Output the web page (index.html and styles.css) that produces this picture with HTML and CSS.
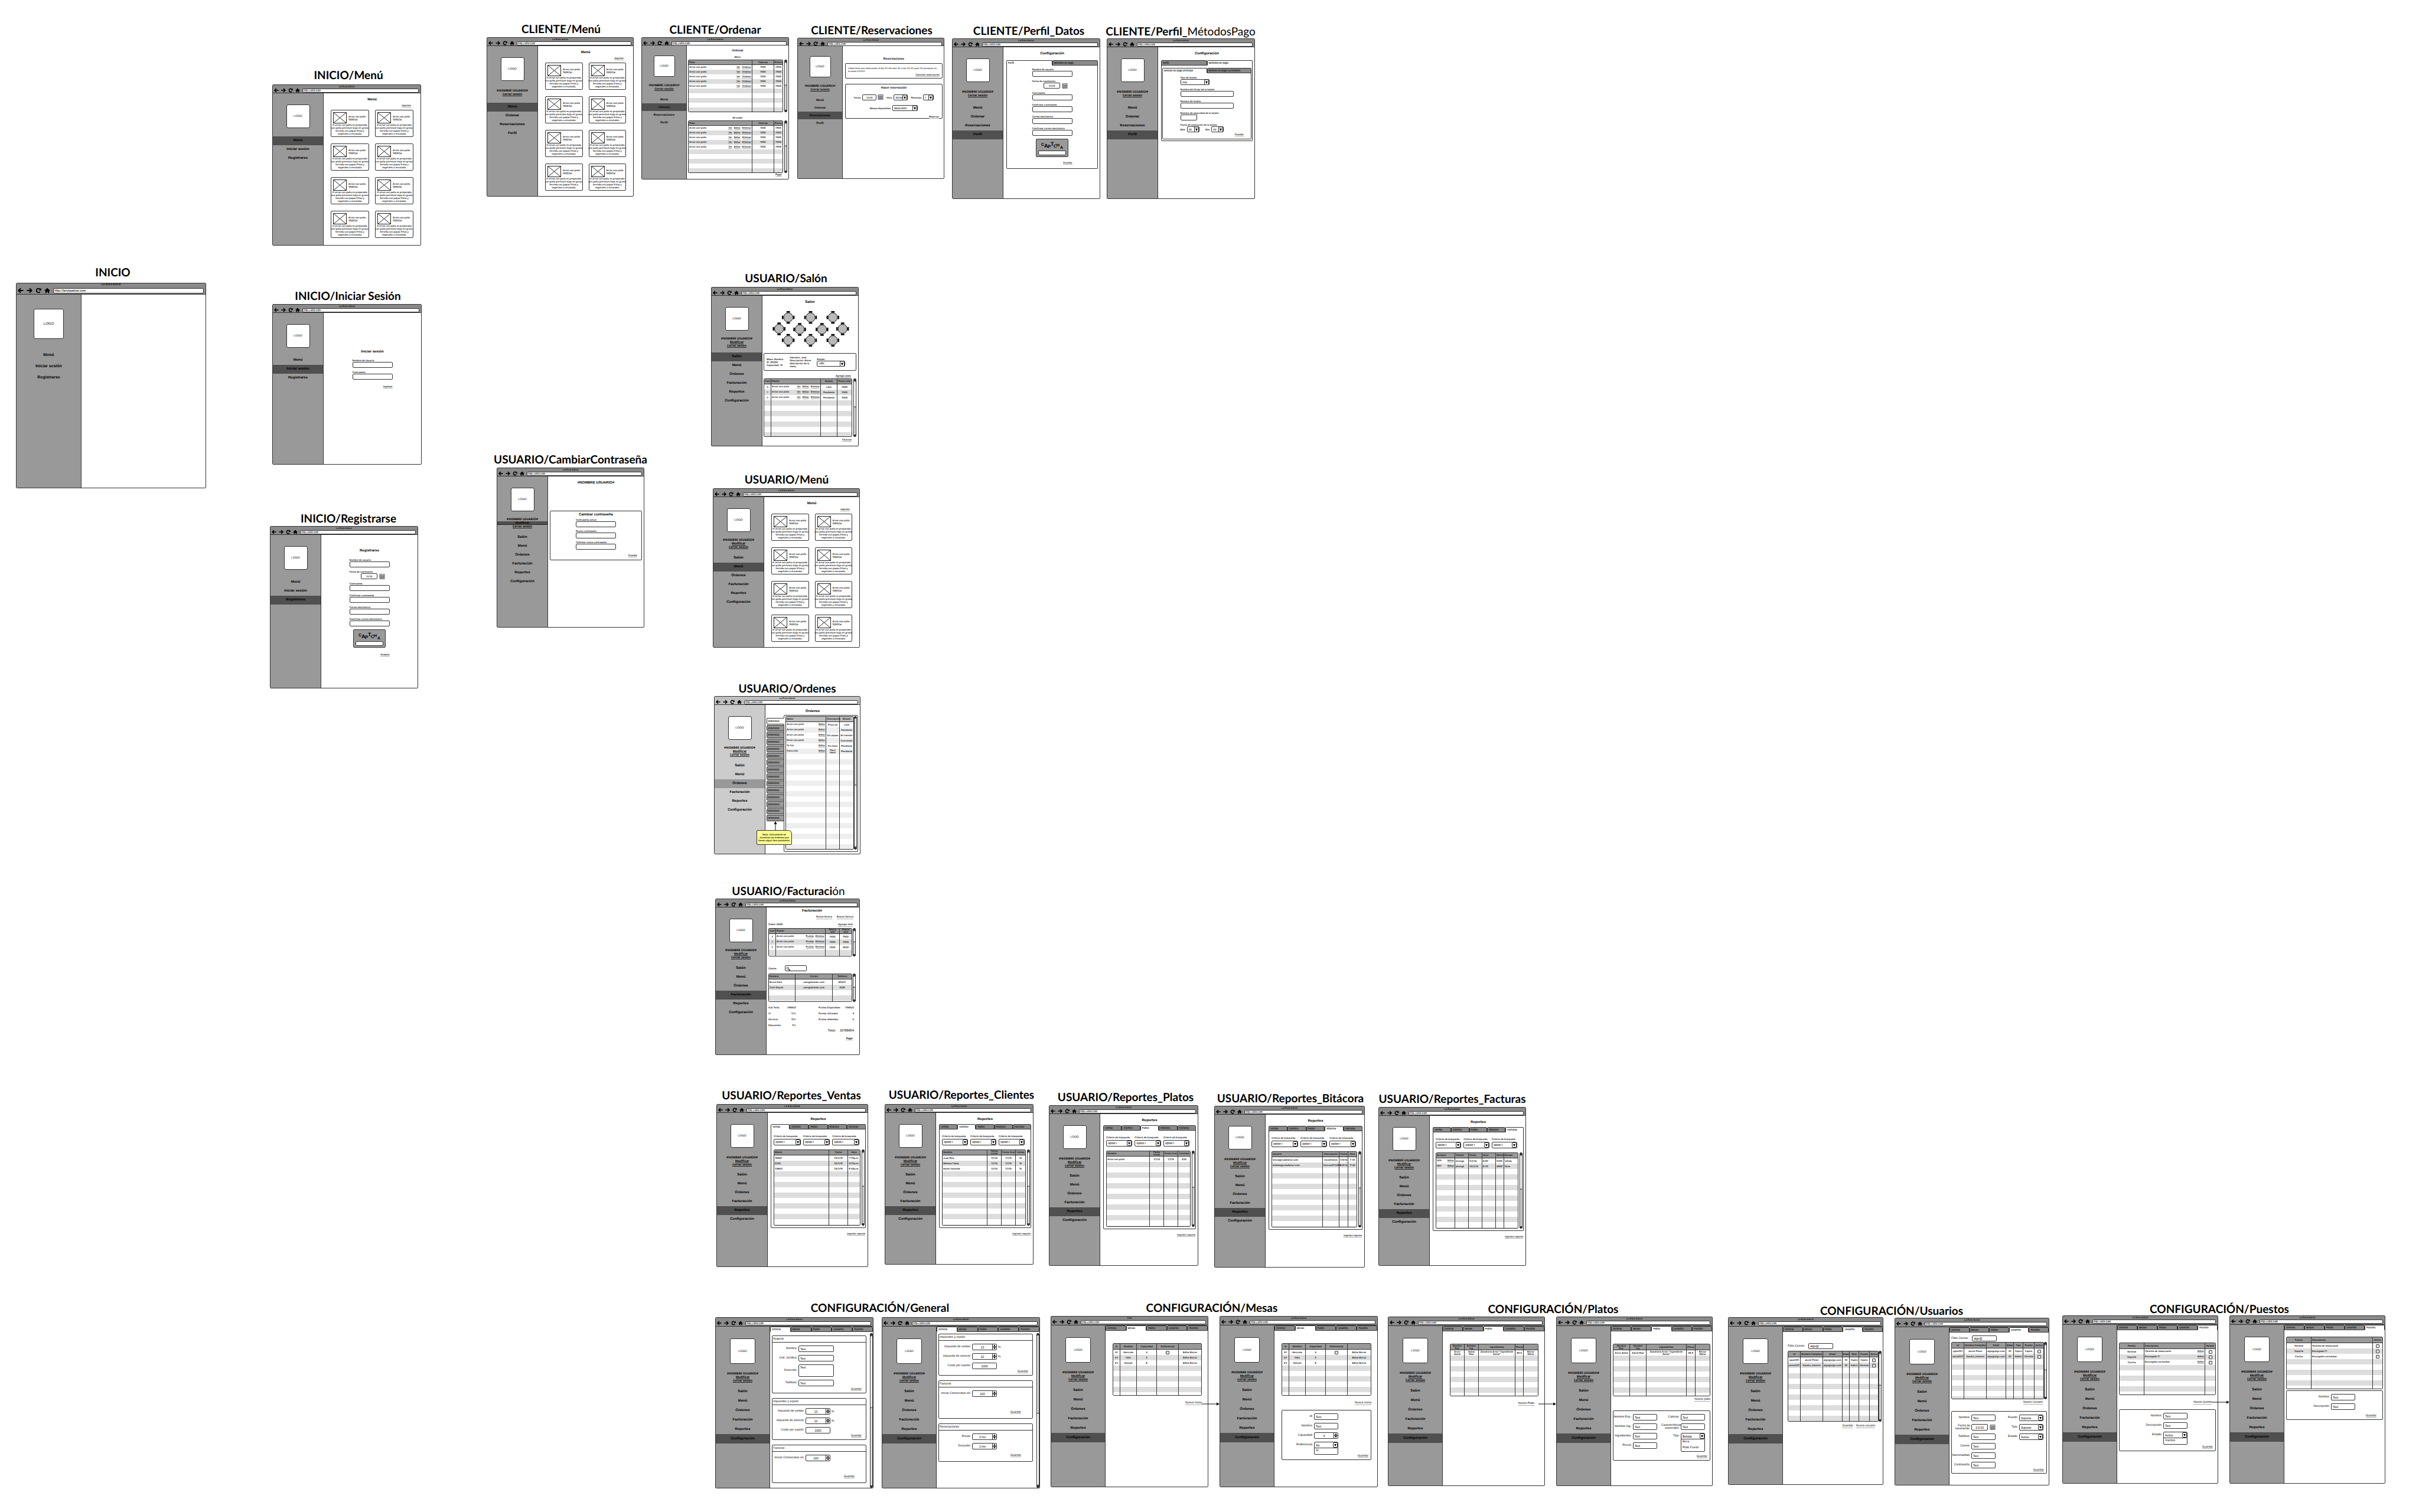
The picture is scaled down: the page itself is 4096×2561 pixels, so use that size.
FILE: index.html
```html
<!DOCTYPE html>
<html lang="es">
<head>
<meta charset="utf-8">
<title>La Ruta Astral - Wireframes</title>
<link rel="stylesheet" href="styles.css">
</head>
<body>
<svg class="defs" aria-hidden="true">
  <symbol id="i-back" viewBox="0 0 16 16"><path d="M8 2L2 8l6 6M2.500 8H15" fill="none" stroke="#000" stroke-width="3"/></symbol>
  <symbol id="i-next" viewBox="0 0 16 16"><path d="M8 2l6 6-6 6M13.500 8H1" fill="none" stroke="#000" stroke-width="3"/></symbol>
  <symbol id="i-reload" viewBox="0 0 16 16"><path d="M12.500 11.500A5.500 5.500 0 1 1 12 4" fill="none" stroke="#000" stroke-width="3"/><path d="M15.500 1v7h-7z"/></symbol>
  <symbol id="i-home" viewBox="0 0 16 16"><path d="M8 1l7 7v1h-2v6h-3.500v-4h-3v4H3V9H1V8z"/></symbol>
  <symbol id="i-cal" viewBox="0 0 20 20"><path d="M1 1h18v18H1zM1 5h18M1 9.700h18M1 14.400h18M5.500 5v14M10 5v14M14.500 5v14" fill="#fff" stroke="#333" stroke-width="1.600"/></symbol>
  <symbol id="i-photo" viewBox="0 0 23 19" preserveAspectRatio="none"><path d="M.5 .5h22v18H.5zL22.500 18.500M22.500 .5L.5 18.500" fill="#fff" stroke="#222"/></symbol>
  <symbol id="i-table" viewBox="-12 -12 24 24"><path d="M-3-11h6v2.500h-6zM-3 8.500h6V11h-6zM-11-3h2.500v6H-11zM8.500-3H11v6H8.500z"/><circle r="8" fill="#b9b9b9" stroke="#111"/></symbol>
</svg>

<template id="t-dish">
  <article class="dish">
    <div class="dish-top"><svg class="photo"><use href="#i-photo"/></svg><h4>Arroz con pollo<br>1000Cal</h4></div>
    <p>El arroz con pollo es preparado<br>con pollo premium bajo en grasa.<br>Servido con papas fritas y<br>vegetales o ensalada.</p>
  </article>
</template>
<template id="t-captcha">
  <div class="captcha">
    <svg viewBox="0 0 47 19"><text font-size="8"><tspan x="5" y="11" font-size="7">C</tspan><tspan x="10" y="14" font-size="9">A</tspan><tspan x="16" y="15">P</tspan><tspan x="21" y="11" font-size="9">T</tspan><tspan x="26" y="14">C</tspan><tspan x="31" y="12" font-size="7">H</tspan><tspan x="37" y="16" font-size="7">A</tspan></text></svg>
    <input type="text" aria-label="Captcha">
  </div>
</template>
<template id="t-filters">
  <div class="filters">
    <label>Criterio de búsqueda<select><option>Option 1</option></select></label>
    <label>Criterio de búsqueda<select><option>Option 1</option></select></label>
    <label>Criterio de búsqueda<select><option>Option 1</option></select></label>
  </div>
</template>

<main class="board">

<h2 class="label" id="l-inicio">INICIO</h2>
<section class="screen big" id="s-inicio" data-nav="inicio" data-url="http://larutaastral.com"><div class="page"></div></section>

<h2 class="label" id="l-imenu">INICIO/Menú</h2>
<section class="screen" id="s-imenu" data-nav="inicio" data-active="Menú">
  <div class="page"><h3>Menú</h3><a class="end print" href="#">Imprimir</a><div class="dishes"></div></div>
</section>

<h2 class="label" id="l-login">INICIO/Iniciar Sesión</h2>
<section class="screen" id="s-login" data-nav="inicio" data-active="Iniciar sesión">
  <div class="page login">
    <h3>Iniciar sesión</h3>
    <form class="form">
      <label>Nombre de Usuario<input type="text"></label>
      <label>Contraseña<input type="password"></label>
      <a class="end" href="#">Ingresar</a>
    </form>
  </div>
</section>

<h2 class="label" id="l-reg">INICIO/Registrarse</h2>
<section class="screen" id="s-reg" data-nav="inicio" data-active="Registrarse">
  <div class="page signup">
    <h3>Registrarse</h3>
    <form class="form">
      <label>Nombre de usuario<input type="text"></label>
      <label>Fecha de nacimiento<span class="date"><input type="text" value="1/1/10"><svg class="cal"><use href="#i-cal"/></svg></span></label>
      <label>Contraseña<input type="password"></label>
      <label>Confirmar contraseña<input type="password"></label>
      <label>Correo electrónico<input type="email"></label>
      <label>Confirmar correo electrónico<input type="email"></label>
      <div data-use="t-captcha"></div>
      <a class="end" href="#">Aceptar</a>
    </form>
  </div>
</section>

<h2 class="label" id="l-cmenu">CLIENTE/Menú</h2>
<section class="screen" id="s-cmenu" data-nav="cliente" data-active="Menú">
  <div class="page"><h3>Menú</h3><a class="end print" href="#">Imprimir</a><div class="dishes"></div></div>
</section>

<h2 class="label" id="l-order">CLIENTE/Ordenar</h2>
<section class="screen small" id="s-order" data-nav="cliente" data-active="Ordenar">
  <div class="page order">
    <h3>Ordenar</h3>
    <p class="cap">Menú</p>
    <div class="wrap"><table class="data">
      <colgroup><col><col class="c37"><col class="c14"></colgroup>
      <thead><tr><th class="l">Plato<th>Calorías<th>Precio</thead>
      <tbody>
      <tr><td class="l">Arroz con pollo<span class="acts"><a href="#">Ver</a><a href="#">Ordenar</a></span><td>1000<td>2500
      <tr><td class="l">Arroz con pollo<span class="acts"><a href="#">Ver</a><a href="#">Ordenar</a></span><td>1000<td>2500
      <tr><td class="l">Arroz con pollo<span class="acts"><a href="#">Ver</a><a href="#">Ordenar</a></span><td>1000<td>2500
      <tr><td class="l">Arroz con pollo<span class="acts"><a href="#">Ver</a><a href="#">Ordenar</a></span><td>1000<td>2500
      <tr><td class="l">Arroz con pollo<span class="acts"><a href="#">Ver</a><a href="#">Ordenar</a></span><td>1000<td>2500
    </table><div class="scroll"><i></i></div></div>
    <p class="cap second">Mi orden</p>
    <div class="wrap"><table class="data">
      <colgroup><col><col class="c37"><col class="c14"></colgroup>
      <thead><tr><th class="l">Plato<th>Calorías<th>Precio</thead>
      <tbody>
      <tr><td class="l">Arroz con pollo<span class="acts"><a href="#">Ver</a><a href="#">Editar</a><a href="#">Eliminar</a></span><td>1000<td>2500
      <tr><td class="l">Arroz con pollo<span class="acts"><a href="#">Ver</a><a href="#">Editar</a><a href="#">Eliminar</a></span><td>1000<td>2500
      <tr><td class="l">Arroz con pollo<span class="acts"><a href="#">Ver</a><a href="#">Editar</a><a href="#">Eliminar</a></span><td>1000<td>2500
      <tr><td class="l">Arroz con pollo<span class="acts"><a href="#">Ver</a><a href="#">Editar</a><a href="#">Eliminar</a></span><td>1000<td>2500
      <tr><td class="l">Arroz con pollo<span class="acts"><a href="#">Ver</a><a href="#">Editar</a><a href="#">Eliminar</a></span><td>1000<td>2500
    </table><div class="scroll"><i></i></div></div>
    <a class="end pay" href="#">Pagar</a>
  </div>
</section>

<h2 class="label" id="l-res">CLIENTE/Reservaciones</h2>
<section class="screen small" id="s-res" data-nav="cliente" data-active="Reservaciones">
  <div class="page reserve">
    <h3>Reservaciones</h3>
    <div class="box notice"><p>Usted tiene una reservación el día XX del mes XX a las XX:XX para XX personas en<br>la mesa XXXXX.</p><a class="end" href="#">Cancelar reservación</a></div>
    <form class="box booking">
      <h4>Hacer reservación</h4>
      <div class="line"><label>Fecha<input class="w24" type="text" value="1/1/10"></label><svg class="cal"><use href="#i-cal"/></svg><label>Hora<select class="w22"><option>00:00</option></select></label><label>Personas<select class="w18"><option>1</option></select></label></div>
      <div class="line"><label>Mesas disponibles<select class="w43"><option>Mesa 0001</option></select></label></div>
      <a class="end" href="#">Reservar</a>
    </form>
  </div>
</section>

<h2 class="label" id="l-data">CLIENTE/Perfil_Datos</h2>
<section class="screen" id="s-data" data-nav="cliente" data-active="Perfil">
  <div class="page profile">
    <h3>Configuración</h3>
    <div class="tabs" data-tabs="perfil" data-on="Perfil"></div>
    <div class="panel">
      <form class="form">
        <label>Nombre de usuario<input type="text"></label>
        <label>Fecha de nacimiento<span class="date"><input type="text" value="1/1/10"><svg class="cal"><use href="#i-cal"/></svg></span></label>
        <label>Contraseña<input type="password"></label>
        <label>Confirmar contraseña<input type="password"></label>
        <label>Correo electrónico<input type="email"></label>
        <label>Confirmar correo electrónico<input type="email"></label>
        <div data-use="t-captcha"></div>
        <a class="end" href="#">Guardar</a>
      </form>
    </div>
  </div>
</section>

<h2 class="label" id="l-pay">CLIENTE/Perfil_<span>MétodosPago</span></h2>
<section class="screen" id="s-pay" data-nav="cliente" data-active="Perfil">
  <div class="page profile">
    <h3>Configuración</h3>
    <div class="tabs" data-tabs="perfil" data-on="Métodos de pago"></div>
    <div class="panel cards">
      <div class="tabs" data-tabs="tarjeta" data-on="Método de pago principal"></div>
      <div class="panel">
        <form class="form wide">
          <label>Tipo de tarjeta<select class="w49"><option>Visa</option></select></label>
          <label>Nombre del titular de la tarjeta<input type="text"></label>
          <label>Número de tarjeta<input type="text"></label>
          <label>Número de seguridad de la tarjeta<input class="w28" type="text"></label>
          <fieldset><legend>Fecha de expiración de la tarjeta</legend><div class="line"><label>Mes<select class="w21"><option>00</option></select></label><label>Año<select class="w21"><option>00</option></select></label></div></fieldset>
        </form>
        <a class="end" href="#">Guardar</a>
      </div>
    </div>
  </div>
</section>

<h2 class="label" id="l-salon">USUARIO/Salón</h2>
<section class="screen" id="s-salon" data-nav="usuario" data-active="Salón">
  <div class="page room">
    <h3>Salón</h3>
    <svg class="floor" viewBox="0 0 162 66">
      <g><use href="#i-table" x="31" y="1" width="24" height="24"/><use href="#i-table" x="70" y="1" width="24" height="24"/><use href="#i-table" x="109" y="1" width="24" height="24"/>
      <use href="#i-table" x="15" y="21" width="24" height="24"/><use href="#i-table" x="51" y="22" width="24" height="24"/><use href="#i-table" x="90" y="22" width="24" height="24"/><use href="#i-table" x="126" y="21" width="24" height="24"/>
      <use href="#i-table" x="31" y="41" width="24" height="24"/><use href="#i-table" x="70" y="41" width="24" height="24"/><use href="#i-table" x="109" y="41" width="24" height="24"/></g>
    </svg>
    <div class="box info"><p>Mesa: Nombre.<br>ID: #0000<br>Capacidad: 10</p><p>Salonero: Jose<br>Descripción: Breve<br>descripción de la<br>mesa.</p><label>Estado<select><option>Libre</option></select></label></div>
    <a class="end add" href="#">Agregar plato</a>
    <div class="wrap"><table class="data">
      <colgroup><col class="c12"><col><col class="c28"><col class="c24"></colgroup>
      <thead><tr><th>Cant<th class="l">Platillo<th>Estado<th>Precio Unit</thead>
      <tbody>
      <tr><td>3<td class="l">Arroz con pollo<span class="acts"><a href="#">Ver</a><a href="#">Editar</a><a href="#">Eliminar</a></span><td>Listo<td>2500
      <tr><td>1<td class="l">Arroz con pollo<span class="acts"><a href="#">Ver</a><a href="#">Editar</a><a href="#">Eliminar</a></span><td>Pendiente<td>2500
      <tr><td>2<td class="l">Arroz con pollo<span class="acts"><a href="#">Ver</a><a href="#">Editar</a><a href="#">Eliminar</a></span><td>Pendiente<td>2500
    </table><div class="scroll"><i></i></div></div>
    <a class="end bill" href="#">Facturar</a>
  </div>
</section>

<h2 class="label" id="l-pass">USUARIO/CambiarContraseña</h2>
<section class="screen" id="s-pass" data-nav="usuario" data-active="Modificar">
  <div class="page password">
    <h3>#NOMBRE USUARIO#</h3>
    <div class="box">
      <h4>Cambiar contraseña</h4>
      <form class="form">
        <label>Contraseña actual<input type="password"></label>
        <label>Nueva contraseña<input type="password"></label>
        <label>Cofirmar nueva contraseña<input type="password"></label>
      </form>
      <a class="end" href="#">Guardar</a>
    </div>
  </div>
</section>

<h2 class="label" id="l-umenu">USUARIO/Menú</h2>
<section class="screen" id="s-umenu" data-nav="usuario" data-active="Menú">
  <div class="page"><h3>Menú</h3><a class="end print" href="#">Imprimir</a><div class="dishes"></div></div>
</section>

<h2 class="label" id="l-orders">USUARIO/Ordenes</h2>
<section class="screen light" id="s-orders" data-nav="usuario" data-active="Órdenes">
  <div class="page orders">
    <h3>Órdenes</h3>
    <div class="split">
      <div class="vtabs"></div>
      <div class="sheet wrap"><table class="data">
        <colgroup><col><col class="c23"><col class="c23"></colgroup>
        <thead><tr><th class="l">Name<th>Descripcion<th>Estado</thead>
        <tbody>
        <tr><td class="l">Arroz con pollo<span class="acts"><a href="#">Editar</a></span><td>Poca sal<td>Listo
        <tr><td class="l">Arroz con pollo<span class="acts"><a href="#">Editar</a></span><td><td>Pendiente
        <tr><td class="l">Arroz con pollo<span class="acts"><a href="#">Editar</a></span><td>Sin papas<td>En tránsito
        <tr><td class="l">Arroz con pollo<span class="acts"><a href="#">Editar</a></span><td><td>Cancelado
        <tr><td class="l">Te frio<span class="acts"><a href="#">Editar</a></span><td>Sin hielo<td>Pendiente
        <tr><td class="l">Coca cola<span class="acts"><a href="#">Editar</a></span><td>Poco<br>Hielo<td>Pendiente
      </table><div class="scroll low"><i></i></div></div>
    </div>
  </div>
  <svg class="pointer" viewBox="0 0 6 15"><path d="M3 3v12" stroke="#111"/><path d="M3 0l2.500 5h-5z"/></svg>
  <aside class="note">Nota: Únicamente se<br>muestran las órdenes que<br>tienen algún ítem pendiente.</aside>
</section>

<h2 class="label" id="l-bill">USUARIO/Facturaci<span>ón</span></h2>
<section class="screen" id="s-bill" data-nav="usuario" data-active="Facturación">
  <div class="page billing">
    <h3>Facturación</h3>
    <div class="links"><a href="#">Nueva factura</a><a href="#">Buscar factura</a></div>
    <div class="between"><span>Orden: ####</span><a href="#">Agregar ítem</a></div>
    <div class="wrap"><table class="data">
      <colgroup><col class="c12"><col><col class="c24"><col class="c20"></colgroup>
      <thead><tr><th>Cant<th class="l">Platillo<th>Precio<br>Unit<th>Precio<br>Unit</thead>
      <tbody>
      <tr><td>3<td class="l">Arroz con pollo<span class="acts"><a href="#">Puntos</a><a href="#">Eliminar</a></span><td>2500<td>7500
      <tr><td>1<td class="l">Arroz con pollo<span class="acts"><a href="#">Puntos</a><a href="#">Eliminar</a></span><td>2500<td>2500
      <tr><td>2<td class="l">Arroz con pollo<span class="acts"><a href="#">Puntos</a><a href="#">Eliminar</a></span><td>2500<td>5000
    </table><div class="scroll"><i></i></div></div>
    <label class="client">Cliente:<span class="search"><svg viewBox="0 0 10 10"><circle cx="4" cy="4" r="2.500" fill="none" stroke="#111"/><path d="M6 6l3.500 3.500" stroke="#111" stroke-width="2"/></svg><input type="search"></span></label>
    <div class="wrap"><table class="data">
      <colgroup><col class="c45"><col><col class="c32"></colgroup>
      <thead><tr><th class="l">Nombre<th>Correo<th>Teléfono</thead>
      <tbody>
      <tr><td class="l">Bruce Kent<td>user@domain.com<td>65432
      <tr><td class="l">Cark Wayne<td>user@domain.com<td>5418
    </table><div class="scroll"><i></i></div></div>
    <div class="totals">
      <dl><dt>Sub Total:<dd>256542<dt>IV:<dd>13%<dt>Servicio:<dd>10%<dt>Descuento:<dd>5%</dl>
      <dl><dt>Puntos Disponibles<dd>256542<dt>Puntos utilizados<dd>5<dt>Puntos obtenidos<dd>0</dl>
    </div>
    <p class="total"><span>Total:</span><span>32156654</span></p>
    <a class="end strong" href="#">Pagar</a>
  </div>
</section>

<h2 class="label" id="l-rv">USUARIO/Reportes_Ventas</h2>
<section class="screen rep" id="s-rv" data-nav="usuario" data-active="Reportes">
  <div class="page report"><h3>Reportes</h3><div class="tabs" data-tabs="reportes" data-on="Ventas"></div>
    <div class="panel"><div data-use="t-filters"></div>
      <div class="wrap"><table class="data"><colgroup><col><col class="c32"><col class="c20"></colgroup>
      <thead><tr><th class="l">Monto<th>Fecha<th>Hora</thead>
      <tbody><tr><td class="l">15800<td>20/3/15<td>7:35p.m.<tr><td class="l">5200<td>20/3/15<td>9:20p.m.<tr><td class="l">20600<td>20/3/15<td>8:45p.m.
      </table><div class="scroll"><i></i></div></div></div>
    <a class="end" href="#">Imprimir reporte</a></div>
</section>

<h2 class="label" id="l-rc">USUARIO/Reportes_Clientes</h2>
<section class="screen rep" id="s-rc" data-nav="usuario" data-active="Reportes">
  <div class="page report"><h3>Reportes</h3><div class="tabs" data-tabs="reportes" data-on="Clientes"></div>
    <div class="panel"><div data-use="t-filters"></div>
      <div class="wrap"><table class="data"><colgroup><col><col class="c24"><col class="c24"><col class="c16"></colgroup>
      <thead><tr><th class="l">Nombre<th>Fecha<br>inicial<th>Fecha final<th>Visitas</thead>
      <tbody><tr><td class="l">Juan Ríos<td>1/1/14<td>1/1/15<td>10<tr><td class="l">Melissa Fallas<td>1/1/14<td>1/1/15<td>10<tr><td class="l">Hazel Valverde<td>1/1/14<td>1/1/15<td>10
      </table><div class="scroll"><i></i></div></div></div>
    <a class="end" href="#">Imprimir reporte</a></div>
</section>

<h2 class="label" id="l-rp">USUARIO/Reportes_Platos</h2>
<section class="screen rep" id="s-rp" data-nav="usuario" data-active="Reportes">
  <div class="page report"><h3>Reportes</h3><div class="tabs" data-tabs="reportes" data-on="Platos"></div>
    <div class="panel"><div data-use="t-filters"></div>
      <div class="wrap"><table class="data"><colgroup><col><col class="c24"><col class="c24"><col class="c20"></colgroup>
      <thead><tr><th class="l">Nombre<th>Fecha<br>inicial<th>Fecha final<th>Cantidad</thead>
      <tbody><tr><td class="l">Arroz con pollo<td>1/1/14<td>1/1/15<td>434
      </table><div class="scroll"><i></i></div></div></div>
    <a class="end" href="#">Imprimir reporte</a></div>
</section>

<h2 class="label" id="l-rb">USUARIO/Reportes_Bitácora</h2>
<section class="screen rep" id="s-rb" data-nav="usuario" data-active="Reportes">
  <div class="page report"><h3>Reportes</h3><div class="tabs" data-tabs="reportes" data-on="Bitácora"></div>
    <div class="panel"><div data-use="t-filters"></div>
      <div class="wrap"><table class="data"><colgroup><col><col class="c28"><col class="c15"><col class="c14"></colgroup>
      <thead><tr><th class="l">Usuario<th>Descripción<th>Fecha<th>Hora</thead>
      <tbody><tr><td class="l">lmora@rutaAstral.com<td>inicioSesion<td>2/5/14<td>7:30<tr><td class="l">mfallas@rutaAstral.com<td>factura#23453<td>6/8/14<td>11:45
      </table><div class="scroll"><i></i></div></div></div>
    <a class="end" href="#">Imprimir reporte</a></div>
</section>

<h2 class="label" id="l-rf">USUARIO/Reportes_Facturas</h2>
<section class="screen rep" id="s-rf" data-nav="usuario" data-active="Reportes">
  <div class="page report"><h3>Reportes</h3><div class="tabs" data-tabs="reportes" data-on="Facturas"></div>
    <div class="panel"><div data-use="t-filters"></div>
      <div class="wrap"><table class="data left"><colgroup><col><col class="c23"><col class="c23"><col class="c23"><col class="c14"><col class="c23"></colgroup>
      <thead><tr><th>Numero<th>Cliente<th>Fecha<th>Hora<th>Monto<th>Estado</thead>
      <tbody><tr><td>005<span class="acts"><a href="#">Editar</a></span><td>jmonge<td>5/3/14<td>6:50<td>5300<td>Válida<tr><td>002<span class="acts"><a href="#">Editar</a></span><td>jmonge<td>20/3/14<td>6:30<td>4800<td>Nula
      </table><div class="scroll"><i></i></div></div></div>
    <a class="end" href="#">Imprimir reporte</a></div>
</section>

<h2 class="label" id="l-general">CONFIGURACIÓN/General</h2>
<section class="screen cfg" id="s-g1" data-nav="usuario" data-active="Configuración">
  <div class="page"><div class="tabs" data-tabs="config" data-on="General"></div>
    <div class="pane"><div class="stack">
      <form class="group h98"><h4>Negocio</h4><div class="rows biz">
        <label class="row"><span>Nombre:</span><input type="text" value="Text"></label>
        <label class="row"><span>Ced. Jurídica:</span><input type="text" value="Text"></label>
        <label class="row"><span>Dirección:</span><textarea>Text</textarea></label>
        <label class="row"><span>Teléfono:</span><input type="text" value="Text"></label></div>
        <a class="end" href="#">Guardar</a></form>
      <form class="group h71"><h4>Impuestos y exprés</h4><div class="rows tax">
        <label class="row"><span>Impuesto de ventas:</span><span class="spin"><input type="text" value="13"></span>%</label>
        <label class="row"><span>Impuesto de servicio:</span><span class="spin"><input type="text" value="10"></span>%</label>
        <label class="row"><span>Costo por exprés:</span><input class="mid" type="text" value="1000"></label></div>
        <a class="end" href="#">Guardar</a></form>
      <form class="group h65"><h4>Facturas</h4><div class="rows tax">
        <label class="row"><span>Iniciar Consecutivo en:</span><span class="spin"><input type="text" value="100"></span></label></div>
        <a class="end in" href="#">Guardar</a></form>
    </div><div class="scroll"><i></i></div></div></div>
</section>
<section class="screen cfg" id="s-g2" data-nav="usuario" data-active="Configuración">
  <div class="page"><div class="tabs" data-tabs="config" data-on="General"></div>
    <div class="pane scrolled"><div class="stack">
      <form class="group h71"><h4>Impuestos y exprés</h4><div class="rows tax">
        <label class="row"><span>Impuesto de ventas:</span><span class="spin"><input type="text" value="13"></span>%</label>
        <label class="row"><span>Impuesto de servicio:</span><span class="spin"><input type="text" value="10"></span>%</label>
        <label class="row"><span>Costo por exprés:</span><input class="mid" type="text" value="1000"></label></div>
        <a class="end" href="#">Guardar</a></form>
      <form class="group h65"><h4>Facturas</h4><div class="rows tax">
        <label class="row"><span>Iniciar Consecutivo en:</span><span class="spin"><input type="text" value="100"></span></label></div>
        <a class="end in" href="#">Guardar</a></form>
      <form class="group h65"><h4>Reservaciones</h4><div class="rows tax">
        <label class="row"><span>Previo:</span><span class="spin"><input type="text" value="2 hrs"></span></label>
        <label class="row"><span>Duración:</span><span class="spin"><input type="text" value="1 hrs"></span></label></div>
        <a class="end in" href="#">Guardar</a></form>
    </div><div class="scroll low"><i></i></div></div></div>
</section>

<h2 class="label" id="l-mesas">CONFIGURACIÓN/Mesas</h2>
<section class="screen cfg" id="s-m1" data-nav="usuario" data-active="Configuración" data-title="Title">
  <div class="page"><div class="tabs" data-tabs="config" data-on="Mesas"></div>
    <div class="list inset"><table class="data"><colgroup><col class="c12"><col class="c28"><col class="c34"><col class="c37"><col></colgroup>
    <thead><tr><th>Id<th>Nombre<th>Capacidad<th>Preferencial<th></thead>
    <tbody><tr><td>A1<td>Hercules<td>4<td><input type="checkbox" checked aria-label="Preferencial"><td>Editar Borrar<tr><td>A2<td>Odin<td>5<td><td>Editar Borrar<tr><td>A3<td>Samael<td>6<td><td>Editar Borrar
    </table><a class="end new" href="#">Nueva mesa</a></div></div>
</section>
<section class="screen cfg" id="s-m2" data-nav="usuario" data-active="Configuración">
  <div class="page"><div class="tabs" data-tabs="config" data-on="Mesas"></div>
    <div class="list inset"><table class="data"><colgroup><col class="c12"><col class="c28"><col class="c34"><col class="c37"><col></colgroup>
    <thead><tr><th>Id<th>Nombre<th>Capacidad<th>Preferencial<th></thead>
    <tbody><tr><td>A1<td>Hercules<td>4<td><input type="checkbox" checked aria-label="Preferencial"><td>Editar Borrar<tr><td>A2<td>Odin<td>5<td><td>Editar Borrar<tr><td>A3<td>Samael<td>6<td><td>Editar Borrar
    </table><a class="end new" href="#">Nueva mesa</a>
    <form class="box edit h85"><div class="rows mesa">
      <label class="row"><span>Id:</span><input type="text" value="Text"></label>
      <label class="row"><span>Nombre:</span><input type="text" value="Text"></label>
      <label class="row"><span>Capacidad:</span><span class="spin"><input type="text" value="4"></span></label>
      <div class="row open"><label for="pref">Preferencial:</label><div><select id="pref"><option>No</option></select><ul><li>Sí</li></ul></div></div></div>
      <a class="end" href="#">Guardar</a></form></div></div>
</section>

<h2 class="label" id="l-platos">CONFIGURACIÓN/Platos</h2>
<section class="screen cfg" id="s-p1" data-nav="usuario" data-active="Configuración">
  <div class="page"><div class="tabs" data-tabs="config" data-on="Platos"></div>
    <div class="list inset"><table class="data"><colgroup><col class="c24"><col class="c24"><col><col class="c14"><col class="c24"></colgroup>
    <thead><tr><th>Nombre<br>Esp.<th>Nombre<br>Ing.<th>Ingredientes<th>Precio<th></thead>
    <tbody><tr><td>Arroz<br>Astral<td>Astral<br>Rise<td>Zanahoria Arroz "ingrediente<br>Astral"<td>$5.5<td>Borrar<br>Editar
    </table><a class="end new in" href="#">Nuevo Plato</a></div></div>
</section>
<section class="screen cfg" id="s-p2" data-nav="usuario" data-active="Configuración">
  <div class="page"><div class="tabs" data-tabs="config" data-on="Platos"></div>
    <div class="list wide near"><table class="data"><colgroup><col class="c28"><col class="c28"><col><col class="c15"><col class="c24"></colgroup>
    <thead><tr><th>Nombre<br>Esp.<th>Nombre<br>Ing.<th>Ingredientes<th>Precio<th></thead>
    <tbody><tr><td>Arroz Astral<td>Astral Rise<td>Zanahoria Arroz "ingrediente<br>Astral"<td>$5.5<td>Borrar<br>Editar
    </table><a class="end new" href="#">Nuevo plato</a>
    <form class="box edit h85"><div class="cols">
      <div class="rows">
        <label class="row"><span>Nombre Esp.:</span><input type="text" value="Text"></label>
        <label class="row"><span>Nombre Ing.:</span><input type="text" value="Text"></label>
        <label class="row"><span>Ingredientes:</span><input type="text" value="Text"></label>
        <label class="row"><span>Precio:</span><input type="text" value="Text"></label></div>
      <div class="rows">
        <label class="row"><span>Calorias:</span><input type="text" value="Text"></label>
        <label class="row"><span>Características<br>especiales:</span><input type="text" value="Text"></label>
        <div class="row open"><label for="tipo">Tipo:</label><div><select id="tipo"><option>Bebida</option></select><ul><li>Boca</li><li>Plato Fuerte</li></ul></div></div></div></div>
      <a class="end" href="#">Guardar</a></form></div></div>
</section>

<h2 class="label" id="l-users">CONFIGURACIÓN/Usuarios</h2>
<section class="screen cfg" id="s-u1" data-nav="usuario" data-active="Configuración">
  <div class="page"><div class="tabs" data-tabs="config" data-on="Usuarios"></div>
    <div class="list users"><label class="filter">Filtro Correo:<input type="text" value="algo@"></label>
    <div class="wrap tall"><table class="data"><colgroup><col class="c20"><col class="c34"><col><col class="c13"><col class="c15"><col class="c17"><col class="c15"></colgroup>
    <thead><tr><th>Id<th>Nombre Completo<th>Email<th>Edad<th>Role<th>Puesto<th>Activo</thead>
    <tbody><tr><td>japer001<td>Javier Perez<td>algo@algo.com<td>30<td>Cajero<td>Cajero<td><input type="checkbox" checked aria-label="Activo"><tr><td>astral002<td>Sandra Jimenez<td>algo@algo.com<td>30<td>Admin<td>Gerente<td><input type="checkbox" checked aria-label="Activo">
    </table><div class="scroll"><i></i></div></div>
    <div class="links"><a href="#">Guardar</a><a href="#">Nuevo usuario</a></div></div></div>
</section>
<section class="screen cfg" id="s-u2" data-nav="usuario" data-active="Configuración">
  <div class="page"><div class="tabs" data-tabs="config" data-on="Usuarios"></div>
    <div class="list users2"><label class="filter">Filtro Correo:<input type="text" value="algo@"></label>
    <div class="wrap"><table class="data"><colgroup><col class="c20"><col class="c37"><col><col class="c14"><col class="c15"><col class="c20"><col class="c15"></colgroup>
    <thead><tr><th>Id<th>Nombre Completo<th>Email<th>Edad<th>Tipo<th>Puesto<th>Activo</thead>
    <tbody><tr><td>japer001<td>Javier Perez<td>algo@algo.com<td>30<td>Cajero<td>Cajero<td><input type="checkbox" checked aria-label="Activo"><tr><td>astral002<td>Sandra Jimenez<td>algo@algo.com<td>30<td>Admin<td>Gerente<td><input type="checkbox" checked aria-label="Activo">
    </table><div class="scroll"><i></i></div></div>
    <a class="end new in" href="#">Nuevo Usuario</a>
    <form class="box edit h105"><div class="cols">
      <div class="rows">
        <label class="row"><span>Nombre:</span><input type="text" value="Text"></label>
        <label class="row"><span>Fecha de<br>nacimiento:</span><span class="date"><input type="text" value="1/1/10"><svg class="cal"><use href="#i-cal"/></svg></span></label>
        <label class="row"><span>Teléfono:</span><input type="text" value="Text"></label>
        <label class="row"><span>Correo:</span><input type="text" value="Text"></label>
        <label class="row"><span>Nacionalidad:</span><input type="text" value="Text"></label>
        <label class="row"><span>Contraseña:</span><input type="text" value="Text"></label></div>
      <div class="rows">
        <label class="row"><span>Puesto:</span><select><option>Soporte</option></select></label>
        <label class="row"><span>Tipo:</span><select><option>Soporte</option></select></label>
        <label class="row"><span>Estado:</span><select><option>Activo</option></select></label></div></div>
      <a class="end" href="#">Guardar</a></form></div></div>
</section>

<h2 class="label" id="l-jobs">CONFIGURACIÓN/Puestos</h2>
<section class="screen cfg" id="s-j1" data-nav="usuario" data-active="Configuración">
  <div class="page"><div class="tabs" data-tabs="config" data-on="Puestos"></div>
    <div class="list wide"><table class="data"><colgroup><col class="c42"><col><col class="c17"></colgroup>
    <thead><tr><th>Puesto<th class="l">Descripción<th>Estado</thead>
    <tbody><tr><td>Gerente<td class="l">Gerente de restaurante<span class="acts"><a href="#">Editar</a></span><td><input type="checkbox" checked aria-label="Estado"><tr><td>Soporte<td class="l">Encargado TI<span class="acts"><a href="#">Editar</a></span><td><input type="checkbox" checked aria-label="Estado"><tr><td>Cocina<td class="l">Encargado cocina/bar<span class="acts"><a href="#">Editar</a></span><td><input type="checkbox" checked aria-label="Estado">
    </table><a class="end new in" href="#">Nuevo puesto</a>
    <form class="box edit h70"><div class="rows job">
      <label class="row"><span>Nombre:</span><input type="text" value="Text"></label>
      <label class="row"><span>Descripción:</span><input type="text" value="Text"></label>
      <div class="row open"><label for="est">Estado:</label><div><select id="est"><option>Activo</option></select><ul><li>Inactivo</li></ul></div></div></div>
      <a class="end" href="#">Guardar</a></form></div></div>
</section>
<section class="screen cfg" id="s-j2" data-nav="usuario" data-active="Configuración">
  <div class="page"><div class="tabs" data-tabs="config" data-on="Puestos"></div>
    <div class="list wide top"><table class="data"><colgroup><col class="c42"><col><col class="c16"></colgroup>
    <thead><tr><th>Puesto<th class="l">Descripción<th>Activo</thead>
    <tbody><tr><td>Gerente<td class="l">Gerente de restaurante<td><input type="checkbox" checked aria-label="Activo"><tr><td>Soporte<td class="l">Encargado TI<td><input type="checkbox" checked aria-label="Activo"><tr><td>Cocina<td class="l">Encargado cocina/bar<td><input type="checkbox" checked aria-label="Activo">
    </table>
    <form class="box edit h49"><div class="rows job2">
      <label class="row"><span>Nombre:</span><input type="text" value="Text"></label>
      <label class="row"><span>Descripción:</span><input type="text" value="Text"></label></div>
      <a class="end" href="#">Guardar</a></form></div></div>
</section>

<svg class="link" id="k-mesas" viewBox="0 0 30 6"><path d="M0 3h27" stroke="#111"/><path d="M30 3l-5-2.500v5z"/></svg>
<svg class="link" id="k-platos" viewBox="0 0 30 6"><path d="M0 3h27" stroke="#111"/><path d="M30 3l-5-2.500v5z"/></svg>
<svg class="link" id="k-jobs" viewBox="0 0 30 6"><path d="M0 3h27" stroke="#111"/><path d="M30 3l-5-2.500v5z"/></svg>
</main>
<script src="app.js"></script>
</body>
</html>
```
FILE: styles.css
```css
* { box-sizing: border-box; margin: 0; padding: 0; }
html, body { background: #fff; }
body { font: 500 4px/5px Inter, "Noto Sans", sans-serif; color: #000; text-rendering: geometricPrecision; }
a { color: inherit; text-decoration: none; border-bottom: 1px solid #aaa; }
button, input, select, textarea { font: inherit; color: inherit; border-radius: 2px; }
ul { list-style: none; }
fieldset { border: 0; }
.defs { position: absolute; width: 0; height: 0; }

/* Board: free canvas with labels and screens */
.board { position: relative; width: 100%; min-height: 100vh; }
.label { position: absolute; width: 300px; font: 700 19px/24px Lato, sans-serif; text-align: center; white-space: nowrap; }
.label span { font-weight: 400; }
.link { position: absolute; width: 30px; height: 6px; }

.screen {
  --bar: 14px; --side: 86px; --logo: 40px; --logotop: 19px; --user: 37px; --usertop: 3px; --item: 15px; --icon: 8px; --row: 9px; --head: 9px;
  --grey: #999; --dark: #8a8a8a; --active: #505050; --stripe: #ddd; --bold: 700 6px/7px "Liberation Sans", sans-serif;
  position: absolute; display: grid; grid-template: var(--bar) 1fr / var(--side) 1fr;
  border: 1px solid #333; border-radius: 2px; background: #fff; white-space: nowrap;
}
.big { --bar: 19px; --side: 110px; --logo: 51px; --logotop: 24px; --item: 19px; --icon: 10px; --bold: 700 7px/8px "Liberation Sans", sans-serif; font-size: 5px; }
.small { --bar: 13px; --side: 76px; --logo: 36px; --logotop: 17px; --user: 32px; --item: 13px; --row: 8px; --head: 8px; --bold: 700 5px/6px "Liberation Sans", sans-serif; }
.rep { --user: 39px; --usertop: 6px; }
.cfg { --bar: 15px; --side: 92px; --logo: 43px; --logotop: 20px; --user: 39px; --usertop: 6px; --item: 16px; --row: 9px; --head: 10px; }
.light { --grey: #ccc; --dark: #c0c0c0; --active: #999; --stripe: #eee; }

/* Browser bar */
.bar { grid-column: 1 / -1; background: var(--dark); border-bottom: 1px solid #333; }
.bar p { height: 4px; line-height: 5px; text-align: center; }
.big .bar p { height: 6px; }
.tools { display: flex; align-items: center; gap: 4px; padding: 1px 3px 0 2px; }
.tools button { width: var(--icon); height: var(--icon); border: 0; background: none; }
.tools svg { display: block; width: 100%; height: 100%; }
.tools input:not([type=checkbox]) { flex: 1; width: auto; min-width: 0; height: 7px; padding: 0 1px; }
.big .tools { gap: 5px; }
.big .tools input:not([type=checkbox]) { height: 9px; }

/* Sidebar */
.side { background: var(--grey); border-right: 1px solid #333; text-align: center; font: var(--bold); }
.logo { display: grid; place-items: center; width: var(--logo); height: var(--logo); margin: var(--logotop) auto 0; border: 1px solid #333; border-radius: 3px; background: #fff; font: 400 5px/6px "Liberation Sans", sans-serif; }
.big .logo { font-size: 6px; }
.user { display: flex; flex-direction: column; justify-content: center; align-items: center; height: var(--user); padding-top: var(--usertop); font: 700 5px/6px "Noto Sans", sans-serif; }
.small .user { font: var(--bold); }
.user a { height: 6px; line-height: 6px; font-size: 5px; border-color: #222; }
.user .on { width: 100%; background: var(--active); }
.gap { height: 14px; }
.big .gap { height: 18px; }
.side li { height: var(--item); }
.side li a { display: grid; place-items: center; height: 100%; border: 0; }
.side .on { background: var(--active); }

/* Page parts */
.page { display: flex; flex-direction: column; min-width: 0; }
h3 { margin-top: 7px; font: var(--bold); line-height: 8px; text-align: center; }
h4 { font: inherit; }
.end { align-self: flex-end; line-height: 6px; height: 6px; }
.box { border: 1px solid #333; border-radius: 2px; display: flex; flex-direction: column; }
input:not([type=checkbox]), select, textarea { display: block; width: 100%; min-width: 0; height: 10px; padding: 0 2px; border: 1px solid #333; background: #fff; resize: none; outline: 0; }
select { appearance: none; background: url("data:image/svg+xml,%3Csvg xmlns='http://www.w3.org/2000/svg' viewBox='0 0 8 9'%3E%3Crect x='.5' y='.5' width='7' height='8' rx='1.500' fill='%23fff' stroke='%23333'/%3E%3Cpath d='M2 3h4L4 7z'/%3E%3C/svg%3E") right center / 8px 9px no-repeat #fff; }
input[type=search] { appearance: none; }
.cal { display: block; flex: none; width: 10px; height: 9px; }
.links { display: flex; justify-content: flex-end; gap: 8px; line-height: 6px; }
.between { display: flex; justify-content: space-between; line-height: 6px; }
.w18 { width: 18px !important; } .w21 { width: 21px !important; } .w22 { width: 24px !important; } .w24 { width: 24px !important; text-align: center; }
.w28 { width: 28px !important; } .w43 { width: 43px !important; } .w49 { width: 49px !important; }

/* Dishes */
.print { margin: 3px 16px 0 0; }
.dishes { display: grid; grid-template-columns: 1fr 1fr; gap: 11px 10px; margin: 4px 12px 0; }
.dish { display: flex; flex-direction: column; height: 46px; border: 1px solid #333; border-radius: 2px; }
.dish-top { display: flex; align-items: center; gap: 3px; padding: 3px 3px 1px; }
.photo { flex: none; width: 23px; height: 19px; }
.dish p { margin: 0 -4px; text-align: center; font-family: "Noto Sans", sans-serif; }

/* Stacked forms */
.form { display: flex; flex-direction: column; gap: 5px; width: 68px; margin: 0 auto; }
.form label { display: block; }
.date { display: flex; justify-content: center; align-items: center; gap: 3px; padding-left: 12px; }
.date input:not([type=checkbox]) { width: 28px; text-align: center; }
.login h3 { margin-top: 62px; }
.login .form { margin-top: 8px; }
.login .end, .signup .end { margin-top: 4px; }
.signup h3 { margin-top: 23px; }
.signup .form { margin-top: 9px; }
.captcha { width: 55px; height: 31px; margin: 0 auto; border: 1px solid #333; border-radius: 2px; background: #999; padding: 0 3px; font-family: "Liberation Sans", sans-serif; font-weight: 700; }
.captcha svg { display: block; width: 100%; height: 19px; }
.captcha input:not([type=checkbox]) { height: 8px; }

/* Tabs */
.tabs { display: flex; }
.tabs button { flex: 1; height: 9px; padding: 0 2px; border: 1px solid #333; border-radius: 2px 2px 0 0; background: #8a8a8a; text-align: left; }
.tabs .on { border-bottom-color: #fff; background: #fff; }
.panel { margin-top: -1px; border: 1px solid #333; border-top: 0; border-radius: 0 0 2px 2px; display: flex; flex-direction: column; }
.profile { padding: 0 3px 0 5px; }
.profile .tabs { margin-top: 7px; }
.profile > .panel { padding: 5px 2px 6px; }
.profile > .panel > .form .end { margin-top: 2px; }
.cards .tabs { margin-top: 0; }
.profile > .cards { padding: 5px 1px 2px; }
.form.wide { width: 90px; margin-top: 6px; }
.line { display: flex; justify-content: center; gap: 5px; }
.line label { display: flex; align-items: center; gap: 3px; }
.wide .line { justify-content: flex-start; gap: 10px; }
.cards .end { margin: 1px 12px 4px 0; }

/* Reservations */
.reserve { padding: 0 2px 0 4px; }
.reserve h3 { margin-top: 18px; }
.notice { height: 26px; margin-top: 3px; padding: 5px 4px 2px 4px; }
.notice p { flex: 1; font-family: "Liberation Sans", sans-serif; }
.booking { height: 59px; margin-top: 9px; padding: 3px 5px 3px; gap: 8px; }
.booking h4 { font: var(--bold); text-align: center; }
.booking .end { margin-top: -1px; }
.booking .cal { margin: 0 0 0 -3px; }

/* Data tables */
.wrap { display: flex; gap: 2px; }
.data { flex: 1; width: 100%; min-width: 0; table-layout: fixed; border-spacing: 0; border: 1px solid #333; border-radius: 2px; }
.data th { height: var(--head); background: var(--grey); font-weight: 500; border-bottom: 1px solid #333; line-height: 4px; }
.data td { height: var(--row); line-height: 4px; }
.data th, .data td { padding: 0 1px; text-align: center; border-right: 1px solid #333; }
.data th:last-child, .data td:last-child { border-right: 0; }
.data .l, .left th, .left td { text-align: left !important; }
.data tbody tr:nth-child(even) td { background: var(--stripe); }
.data tbody .rest td { height: auto; background: repeating-linear-gradient(#fff 0 var(--row), var(--stripe) var(--row) calc(2 * var(--row))); }
.data tbody .rest:nth-child(even) td { background: repeating-linear-gradient(var(--stripe) 0 var(--row), #fff var(--row) calc(2 * var(--row))); }
.acts { float: right; display: flex; gap: 3px; }
.acts a { height: 5px; }
.scroll { display: flex; flex-direction: column; justify-content: flex-start; flex: none; width: 5px; padding: 4px 0; border: 1px solid #333; border-radius: 2px; background: linear-gradient(#333, #333) top / 3px 3px no-repeat, linear-gradient(#333, #333) bottom / 3px 3px no-repeat, #ddd; }
.scroll i { height: 48%; border-radius: 2px; background: #fff; outline: 1px solid #333; }
.scroll.low { justify-content: flex-end; }
.c12 { width: 12px; } .c13 { width: 13px; } .c14 { width: 14px; } .c15 { width: 15px; } .c16 { width: 16px; } .c17 { width: 17px; } .c20 { width: 20px; }
.c23 { width: 23px; } .c24 { width: 24px; } .c28 { width: 28px; } .c32 { width: 32px; } .c34 { width: 34px; } .c37 { width: 37px; } .c42 { width: 42px; } .c45 { width: 45px; }
input[type=checkbox] { appearance: none; display: block; width: 6px; height: 6px; margin: 0 auto; border: 1px solid #333; border-radius: 1px; background: #fff; overflow: hidden; }
input[type=checkbox]::before { content: "✓"; display: block; font: 700 4px/4px "DejaVu Sans", sans-serif; }

/* Order */
.order { padding: 0 2px; }
.order h3 { margin-top: 5px; }
.cap { margin: 4px 0 2px; text-align: center; }
.second { margin: 7px 0 2px; }
.order .data { height: 89px; }
.pay { margin: 0 9px 0 0; }

/* Room */
.room { padding: 0 3px 0 2px; }
.floor { display: block; height: 66px; margin-top: 8px; }
.info { flex-direction: row; gap: 10px; height: 30px; margin-top: 8px; padding: 3px 4px; align-items: center; }
.info label { flex: 1; max-width: 48px; }
.add { margin: 6px 9px 1px 0; }
.room .data { height: 99px; }
.bill { margin: 2px 8px 0 0; }

/* Password */
.password { padding: 0 3px 0 3px; }
.password .box { margin-top: 43px; height: 84px; }
.password h4 { margin-top: 3px; font: var(--bold); text-align: center; }
.password .form { margin-top: 2px; gap: 4px; }
.password .end { margin: 7px 7px 0 0; }

/* Kitchen orders */
.split { display: flex; margin-top: 2px; padding: 0 3px 0 2px; }
.vtabs { display: grid; grid-auto-rows: 1fr; gap: 1px; width: 30px; height: 175px; margin: 5px -1px 0 0; }
.vtabs button { border: 1px solid #333; border-radius: 2px 0 0 2px; background: #999; padding: 0 1px; text-align: left; }
.vtabs .on { border-right-color: #fff; background: #fff; position: relative; }
.sheet { flex: 1; height: 232px; padding: 1px 1px 3px 2px; gap: 0; border: 1px solid #333; border-radius: 2px; }
.light .data th { background: #bbb; }
.pointer { position: absolute; left: 100px; top: 211px; width: 6px; height: 15px; }
.note { position: absolute; left: 71px; top: 226px; width: 60px; height: 25px; padding-top: 4px; border: 1px solid #333; border-radius: 2px 6px 2px 2px; background: #feff8f; text-align: center; }

/* Billing */
.billing { padding: 0 6px 0 3px; }
.billing h3 { margin-top: 2px; }
.billing .links { margin: 3px 4px 0 0; }
.billing .between { margin: 6px 5px 2px 0; }
.billing .data { height: 48px; }
.billing .wrap { gap: 1px; }
.client { display: flex; align-items: center; gap: 13px; margin: 15px 0 4px; }
.search { display: flex; align-items: center; width: 37px; height: 10px; padding-left: 1px; border: 1px solid #333; border-radius: 2px; }
.search svg { width: 7px; height: 7px; }
.search input:not([type=checkbox]) { flex: 1; height: 7px; border: 0; }
.totals { display: flex; justify-content: space-between; margin: 5px 3px 0 0; line-height: 10px; }
.totals dl { display: grid; grid-template-columns: auto auto; grid-auto-rows: 10px; justify-content: space-between; width: 47px; }
.totals dl + dl { width: 60px; }
.totals dd { text-align: right; }
.total { display: flex; justify-content: flex-end; gap: 7px; margin: 0 3px 6px 0; font-size: 5px; line-height: 8px; }
.strong { margin-right: 5px; font-weight: 700; }

/* Reports */
.report { padding: 0 3px 0 5px; }
.report .tabs { margin-top: 4px; }
.report .panel { padding: 10px 1px 3px 4px; }
.filters { display: grid; grid-template-columns: 1fr 1fr 1fr; gap: 4px; padding-right: 9px; }
.filters select { height: 11px; margin-top: 2px; }
.report .wrap { margin-top: 7px; }
.report .data { height: 129px; }
.report .end { margin: 7px 1px 0 0; }

/* Configuration */
.pane { display: flex; flex: 1; justify-content: space-between; }
.stack { display: flex; flex-direction: column; gap: 8px; flex: 1; margin: 6px 6px 0 3px; }
.scrolled .stack { margin-top: 3px; }
.pane .scroll { margin-top: 2px; }
.group, .edit { display: flex; flex-direction: column; border: 1px solid #333; border-radius: 2px; font: 5px/6px "Liberation Sans", sans-serif; }
.group h4 { height: 11px; padding: 2px 1px; border-bottom: 1px solid #333; margin-bottom: 5px; }
.rows { display: flex; flex-direction: column; gap: 5px; --l: 42px; --i: 41px; }
.biz { --i: 60px; }
.tax { --l: 54px; --i: 42px; }
.mesa { --l: 52px; }
.job { --l: 72px; }
.job2 { --l: 73px; }
.row { display: grid; grid-template-columns: var(--l) var(--i) auto; justify-content: start; align-items: center; gap: 2px; column-gap: 2px; }
.row > :first-child { text-align: right; line-height: 5px; white-space: nowrap; }
.rows input:not([type=checkbox]), .rows select { height: 11px; }
.rows textarea { height: 21px; line-height: 9px; }
.rows .mid { text-align: center; }
.spin { background: url("data:image/svg+xml,%3Csvg xmlns='http://www.w3.org/2000/svg' viewBox='0 0 8 11'%3E%3Cpath d='M.5 0v11M.5 5.500H8' stroke='%23333' fill='none'/%3E%3Cpath d='M2 4.500h4L4 1.500zM2 6.500h4L4 9.500z'/%3E%3C/svg%3E") right center / 8px 11px no-repeat #fff; border-radius: 2px; }
.spin input:not([type=checkbox]) { background: none; padding-right: 9px; text-align: center; }
.row .date { padding: 0; gap: 2px; justify-content: space-between; }
.open { align-items: start; }
.open > label { padding-top: 3px; }
.open > div { height: 11px; }
.open ul { position: relative; margin-top: -1px; border: 1px solid #333; border-radius: 0 0 2px 2px; background: #fff; }
.open li { height: 10px; padding: 0 2px; line-height: 9px; }
.group .end, .edit .end { margin: auto 7px 3px 0; }
.group .in { margin: auto 19px 7px 0; }
.h98 { height: 98px; } .h71 { height: 71px; } .h65 { height: 65px; }
.edit { margin-top: 8px; padding-top: 5px; }
.edit .end { margin-right: 4px; }
.h85 { height: 85px; } .h105 { height: 106px; } .h70 { height: 71px; } .h49 { height: 50px; }
.list { display: flex; flex-direction: column; padding: 21px 10px 0 12px; }
.list .data { height: 89px; flex: none; }
.list .wrap .data { flex: 1; width: auto; }
.new { margin-top: 9px; font: 5px/6px "Liberation Sans", sans-serif; height: 7px; }
.new.in { margin-right: 7px; }
.list.wide { padding: 21px 3px 0 3px; }
.near .new { margin-top: 2px; }
.near .edit { margin-top: 15px; }
.list.top { padding-top: 11px; }
.top .edit { margin-top: 2px; }
.top .edit .end { margin-right: 10px; }
.cols { display: flex; gap: 5px; }
.cols .rows { --l: 31px; }
.list.users { padding: 19px 8px 0 8px; }
.users .wrap { gap: 0; }
.list.users .data { height: 120px; }
.filter { display: flex; align-items: center; gap: 6px; margin-bottom: 3px; font: 5px/6px "Liberation Sans", sans-serif; }
.filter input:not([type=checkbox]) { width: 42px; }
.users .links { margin: 4px 5px 0 0; font: 5px/6px "Liberation Sans", sans-serif; gap: 5px; }
.list.users2 { padding: 5px 3px 0 3px; }
.users2 .wrap { gap: 0; }
.list.users2 .data { height: 97px; }
.users2 .filter { margin-bottom: 1px; }
.users2 .new { margin-top: 2px; }
.users2 .edit { margin-top: 11px; }

/* Canvas places */
#l-inicio { left: 41px; top: 450px; } #s-inicio { left: 27px; top: 479px; width: 322px; height: 348px; }
#l-imenu { left: 440px; top: 116px; } #s-imenu { left: 461px; top: 143px; width: 252px; height: 273px; }
#l-login { left: 439px; top: 490px; } #s-login { left: 461px; top: 515px; width: 253px; height: 272px; }
#l-reg { left: 440px; top: 867px; } #s-reg { left: 457px; top: 891px; width: 251px; height: 275px; }
#l-cmenu { left: 800px; top: 38px; } #s-cmenu { left: 824px; top: 63px; width: 249px; height: 270px; }
#l-order { left: 1061px; top: 39px; } #s-order { left: 1086px; top: 63px; width: 250px; height: 241px; }
#l-res { left: 1326px; top: 40px; } #s-res { left: 1350px; top: 64px; width: 249px; height: 239px; }
#l-data { left: 1592px; top: 41px; } #s-data { left: 1612px; top: 65px; width: 251px; height: 272px; }
#l-pay { left: 1849px; top: 42px; } #s-pay { left: 1874px; top: 65px; width: 251px; height: 272px; }
#l-salon { left: 1181px; top: 460px; } #s-salon { left: 1204px; top: 486px; width: 250px; height: 270px; }
#l-pass { left: 816px; top: 767px; } #s-pass { left: 841px; top: 792px; width: 250px; height: 271px; }
#l-umenu { left: 1182px; top: 801px; } #s-umenu { left: 1207px; top: 827px; width: 249px; height: 270px; }
#l-orders { left: 1183px; top: 1155px; } #s-orders { left: 1209px; top: 1179px; width: 248px; height: 268px; }
#l-bill { left: 1185px; top: 1498px; } #s-bill { left: 1211px; top: 1522px; width: 245px; height: 265px; }
#l-rv { left: 1190px; top: 1844px; } #s-rv { left: 1213px; top: 1870px; width: 257px; height: 276px; }
#l-rc { left: 1478px; top: 1843px; } #s-rc { left: 1498px; top: 1870px; width: 252px; height: 272px; }
#l-rp { left: 1756px; top: 1847px; } #s-rp { left: 1776px; top: 1872px; width: 253px; height: 272px; }
#l-rb { left: 2035px; top: 1849px; } #s-rb { left: 2056px; top: 1873px; width: 255px; height: 274px; }
#l-rf { left: 2309px; top: 1850px; } #s-rf { left: 2334px; top: 1875px; width: 250px; height: 269px; }
#l-general { left: 1340px; top: 2204px; } #s-g1 { left: 1211px; top: 2231px; width: 268px; height: 290px; } #s-g2 { left: 1493px; top: 2231px; width: 268px; height: 290px; }
#l-mesas { left: 1902px; top: 2204px; } #s-m1 { left: 1779px; top: 2229px; width: 267px; height: 290px; } #s-m2 { left: 2065px; top: 2229px; width: 268px; height: 290px; }
#l-platos { left: 2480px; top: 2206px; } #s-p1 { left: 2350px; top: 2230px; width: 266px; height: 287px; } #s-p2 { left: 2635px; top: 2230px; width: 265px; height: 287px; }
#l-users { left: 3053px; top: 2209px; } #s-u1 { left: 2926px; top: 2231px; width: 263px; height: 284px; } #s-u2 { left: 3208px; top: 2232px; width: 262px; height: 284px; }
#l-jobs { left: 3608px; top: 2206px; } #s-j1 { left: 3492px; top: 2228px; width: 264px; height: 285px; } #s-j2 { left: 3775px; top: 2228px; width: 264px; height: 285px; }
#k-mesas { left: 2035px; top: 2375px; } #k-platos { left: 2605px; top: 2375px; } #k-jobs { left: 3745px; top: 2372px; }
```
FILE: app.js
```js
// Fills the parts that every screen of the board shares.
const NAV = {
  inicio: ["Menú", "Iniciar sesión", "Registrarse"],
  cliente: ["Menú", "Ordenar", "Reservaciones", "Perfil"],
  usuario: ["Salón", "Menú", "Órdenes", "Facturación", "Reportes", "Configuración"],
};
const TABS = {
  perfil: ["Perfil", "Métodos de pago"],
  tarjeta: ["Método de pago principal", "Método de pago secundario"],
  reportes: ["Ventas", "Clientes", "Platos", "Bitácora", "Facturas"],
  config: ["General", "Mesas", "Platos", "Usuarios", "Puestos"],
};
const icon = (id, name) => `<button type="button" aria-label="${name}"><svg><use href="#i-${id}"/></svg></button>`;
const on = (a, b) => (a === b ? ' class="on"' : "");

document.querySelectorAll(".screen").forEach((s) => {
  const { nav, active, title = "La Ruta Astral", url = "http://sitio.com" } = s.dataset;
  const modify = nav === "usuario" ? `<a href="#"${on(active, "Modificar")}>Modificar</a>` : "";
  const user = nav === "inicio" ? '<div class="gap"></div>'
    : `<div class="user"><p>#NOMBRE USUARIO#</p>${modify}<a href="#">Cerrar sesión</a></div>`;
  s.insertAdjacentHTML("afterbegin", `
    <header class="bar"><p>${title}</p><div class="tools">
      ${icon("back", "Atrás")}${icon("next", "Adelante")}${icon("reload", "Recargar")}${icon("home", "Inicio")}
      <input type="text" aria-label="Dirección" value="${url}"></div></header>
    <nav class="side"><div class="logo">LOGO</div>${user}
      <ul>${NAV[nav].map((n) => `<li${on(n, active)}><a href="#">${n}</a></li>`).join("")}</ul></nav>`);
});

document.querySelectorAll(".tabs").forEach((t) => {
  t.innerHTML = TABS[t.dataset.tabs].map((n) => `<button type="button"${on(n, t.dataset.on)}>${n}</button>`).join("");
});

document.querySelectorAll("[data-use]").forEach((e) => {
  e.replaceWith(document.getElementById(e.dataset.use).content.cloneNode(true));
});

document.querySelectorAll(".dishes").forEach((d) => {
  for (let i = 0; i < 8; i++) d.append(document.getElementById("t-dish").content.cloneNode(true));
});

document.querySelector(".vtabs").innerHTML = Array.from({ length: 15 }, (_, i) =>
  `<button type="button"${i ? "" : ' class="on"'}>Orden000</button>`).join("");

// Empty space under the last record keeps the column lines and the stripes.
document.querySelectorAll(".data").forEach((t) => {
  const row = t.tBodies[0].insertRow();
  row.className = "rest";
  for (let i = 0; i < t.tHead.rows[0].cells.length; i++) row.insertCell();
});
```
